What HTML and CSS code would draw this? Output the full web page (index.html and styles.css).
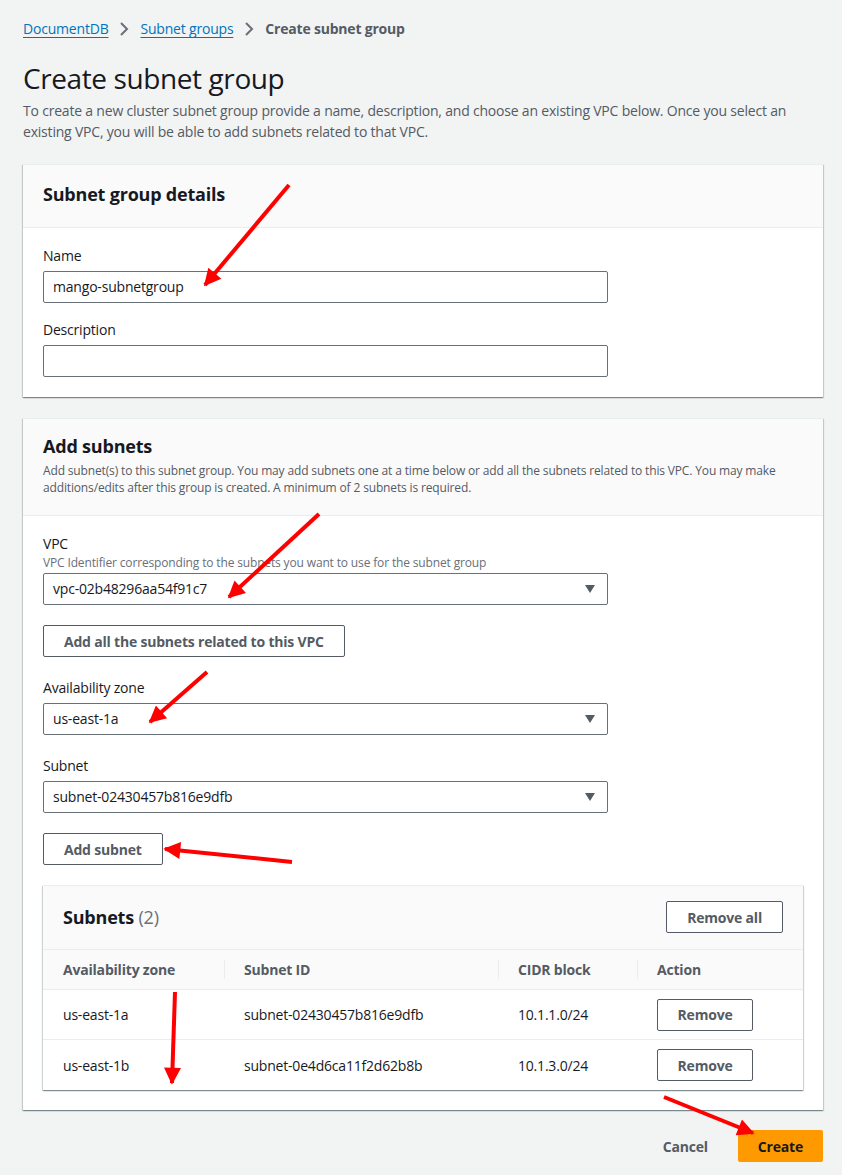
FILE: index.html
```html
<!DOCTYPE html>
<html lang="en">
<head>
<meta charset="utf-8">
<title>Create subnet group</title>
<link rel="stylesheet" href="styles.css">
</head>
<body>
<div class="page">
  <nav class="crumbs">
    <a class="crumb-link" href="#">DocumentDB</a>
    <svg class="chev" width="16" height="16" viewBox="0 0 16 16"><polyline points="5,2 11,8 5,14" fill="none" stroke="#687078" stroke-width="2"/></svg>
    <a class="crumb-link" href="#">Subnet groups</a>
    <svg class="chev" width="16" height="16" viewBox="0 0 16 16"><polyline points="5,2 11,8 5,14" fill="none" stroke="#687078" stroke-width="2"/></svg>
    <span class="crumb-current">Create subnet group</span>
  </nav>

  <h1 class="title">Create subnet group</h1>
  <p class="intro">To create a new cluster subnet group provide a name, description, and choose an existing VPC below. Once you select an existing VPC, you will be able to add subnets related to that VPC.</p>

  <section class="card">
    <header class="card-head">
      <h2 class="card-title">Subnet group details</h2>
    </header>
    <div class="card-body body-tight">
      <div class="field">
        <div class="label">Name</div>
        <div class="input">mango-subnetgroup</div>
      </div>
      <div class="field">
        <div class="label">Description</div>
        <div class="input"></div>
      </div>
    </div>
  </section>

  <section class="card">
    <header class="card-head head-desc">
      <h2 class="card-title">Add subnets</h2>
      <p class="card-desc">Add subnet(s) to this subnet group. You may add subnets one at a time below or add all the subnets related to this VPC. You may make additions/edits after this group is created. A minimum of 2 subnets is required.</p>
    </header>
    <div class="card-body">
      <div class="field">
        <div class="label">VPC</div>
        <div class="sublabel">VPC Identifier corresponding to the subnets you want to use for the subnet group</div>
        <div class="input select">vpc-02b48296aa54f91c7<span class="caret"></span></div>
      </div>
      <div><button class="btn">Add all the subnets related to this VPC</button></div>
      <div class="field">
        <div class="label">Availability zone</div>
        <div class="input select">us-east-1a<span class="caret"></span></div>
      </div>
      <div class="field">
        <div class="label">Subnet</div>
        <div class="input select">subnet-02430457b816e9dfb<span class="caret"></span></div>
      </div>
      <div><button class="btn">Add subnet</button></div>

      <div class="table-box">
        <div class="table-head">
          <h3 class="table-title">Subnets <span class="count">(2)</span></h3>
          <button class="btn">Remove all</button>
        </div>
        <div class="grid">
          <div class="th">Availability zone</div>
          <div class="th sep">Subnet ID</div>
          <div class="th sep">CIDR block</div>
          <div class="th sep">Action</div>

          <div class="td">us-east-1a</div>
          <div class="td">subnet-02430457b816e9dfb</div>
          <div class="td">10.1.1.0/24</div>
          <div class="td"><button class="btn btn-row">Remove</button></div>

          <div class="td">us-east-1b</div>
          <div class="td">subnet-0e4d6ca11f2d62b8b</div>
          <div class="td">10.1.3.0/24</div>
          <div class="td"><button class="btn btn-row">Remove</button></div>
        </div>
      </div>
    </div>
  </section>

  <div class="actions">
    <button class="btn-link">Cancel</button>
    <button class="btn-primary">Create</button>
  </div>

  <svg class="annot" width="842" height="1175" viewBox="0 0 842 1175">
    <defs>
      <marker id="ah" viewBox="0 0 10 10" refX="9" refY="5" markerWidth="22" markerHeight="17" markerUnits="userSpaceOnUse" orient="auto">
        <path d="M0,0 L10,5 L0,10 z" fill="#ff0000"/>
      </marker>
    </defs>
    <g stroke="#ff0000" stroke-width="4" fill="none" marker-end="url(#ah)">
      <line x1="289" y1="185" x2="205" y2="285"/>
      <line x1="319" y1="514" x2="229" y2="597"/>
      <line x1="207" y1="672" x2="150" y2="722"/>
      <line x1="292" y1="862" x2="165" y2="849"/>
      <line x1="175" y1="992" x2="172" y2="1083"/>
      <line x1="664" y1="1097" x2="753" y2="1133"/>
    </g>
  </svg>
</div>
</body>
</html>
```

FILE: styles.css
```css
* { box-sizing: border-box; }
html, body { margin: 0; padding: 0; }
body {
  background: #f2f3f3;
  font-family: "Open Sans", "Liberation Sans", sans-serif;
  font-size: 14px;
  letter-spacing: -0.2px;
  color: #16191f;
}
.page {
  position: relative;
  width: 842px;
  min-height: 1175px;
  padding: 19px 19px 0 23px;
}
.crumbs {
  display: flex;
  align-items: center;
  gap: 8px;
  height: 20px;
  line-height: 20px;
}
.crumb-link {
  color: #0073bb;
  text-decoration: underline;
  text-underline-offset: 3px;
}
.chev { display: block; }
.crumb-current { color: #545b64; font-weight: 700; }
.title {
  margin: 21px 0 0;
  font-size: 28px;
  line-height: 36px;
  font-weight: 400;
  letter-spacing: -0.4px;
  color: #16191f;
}
.intro {
  margin: 4px 0 0;
  line-height: 21px;
  color: #545b64;
}
.card {
  margin-top: 22px;
  background: #fff;
  box-shadow: 0 1px 1px 0 rgba(0,28,36,.3), 1px 1px 1px 0 rgba(0,28,36,.15), -1px 1px 1px 0 rgba(0,28,36,.15);
  border-top: 1px solid #eaeded;
}
.card + .card { margin-top: 21px; }
.card-head {
  background: #fafafa;
  border-bottom: 1px solid #eaeded;
  padding: 18px 20px 22px;
}
.head-desc { padding: 16px 20px 19px; }
.card-title {
  margin: 0;
  font-size: 18px;
  line-height: 22px;
  font-weight: 700;
}
.card-desc {
  margin: 5px 0 0;
  font-size: 12px;
  line-height: 17px;
  letter-spacing: -0.15px;
  color: #545b64;
}
.card-body {
  padding: 17px 20px 20px;
  display: flex;
  flex-direction: column;
  gap: 20px;
}
.body-tight { gap: 16px; }
.field { display: flex; flex-direction: column; }
.label { line-height: 22px; }
.sublabel { font-size: 12px; line-height: 16px; color: #687078; letter-spacing: -0.15px; }
.input {
  margin-top: 4px;
  width: 565px;
  height: 32px;
  border: 1px solid #687078;
  border-radius: 2px;
  background: #fff;
  padding: 0 9px;
  line-height: 30px;
  color: #16191f;
  display: flex;
  align-items: center;
}
.sublabel + .input { margin-top: 2px; }
.select { justify-content: space-between; padding-right: 12px; }
.caret {
  width: 0; height: 0;
  border-left: 5.5px solid transparent;
  border-right: 5.5px solid transparent;
  border-top: 8px solid #545b64;
}
.btn {
  height: 32px;
  padding: 0 20px;
  border: 1px solid #545b64;
  border-radius: 2px;
  background: #fff;
  color: #545b64;
  font-family: inherit;
  font-size: 14px;
  letter-spacing: -0.2px;
  font-weight: 700;
}
.table-box {
  background: #fff;
  box-shadow: 0 1px 1px 0 rgba(0,28,36,.3), 1px 1px 1px 0 rgba(0,28,36,.15), -1px 1px 1px 0 rgba(0,28,36,.15);
  border-top: 1px solid #eaeded;
}
.table-head {
  display: flex;
  align-items: center;
  justify-content: space-between;
  padding: 15px 20px 16px;
  background: #fafafa;
  border-bottom: 1px solid #eaeded;
}
.table-title { margin: 0; font-size: 18px; line-height: 22px; font-weight: 700; }
.count { font-weight: 400; color: #687078; }
.grid {
  display: grid;
  grid-template-columns: 181px 274px 139px 1fr;
}
.th {
  height: 40px;
  display: flex;
  align-items: center;
  padding: 0 20px;
  background: #fafafa;
  color: #545b64;
  font-weight: 700;
  border-bottom: 1px solid #eaeded;
  position: relative;
}
.sep::before {
  content: "";
  position: absolute;
  left: 0; top: 10px; bottom: 10px;
  border-left: 1px solid #eaeded;
}
.td {
  height: 50px;
  display: flex;
  align-items: center;
  padding: 0 20px;
  border-bottom: 1px solid #eaeded;
}
.td:nth-last-child(-n+4) { border-bottom: none; }
.btn-row { width: 96px; padding: 0; }
.actions {
  display: flex;
  justify-content: flex-end;
  align-items: center;
  gap: 10px;
  margin-top: 20px;
}
.btn-link {
  height: 32px;
  padding: 0 20px;
  border: none;
  background: transparent;
  color: #545b64;
  font-family: inherit;
  font-size: 14px;
  letter-spacing: -0.2px;
  font-weight: 700;
}
.btn-primary {
  height: 32px;
  padding: 0 20px;
  border: none;
  border-radius: 2px;
  background: #ff9900;
  color: #16191f;
  font-family: inherit;
  font-size: 14px;
  letter-spacing: -0.2px;
  font-weight: 700;
}
.annot {
  position: absolute;
  left: 0; top: 0;
  pointer-events: none;
}
```
